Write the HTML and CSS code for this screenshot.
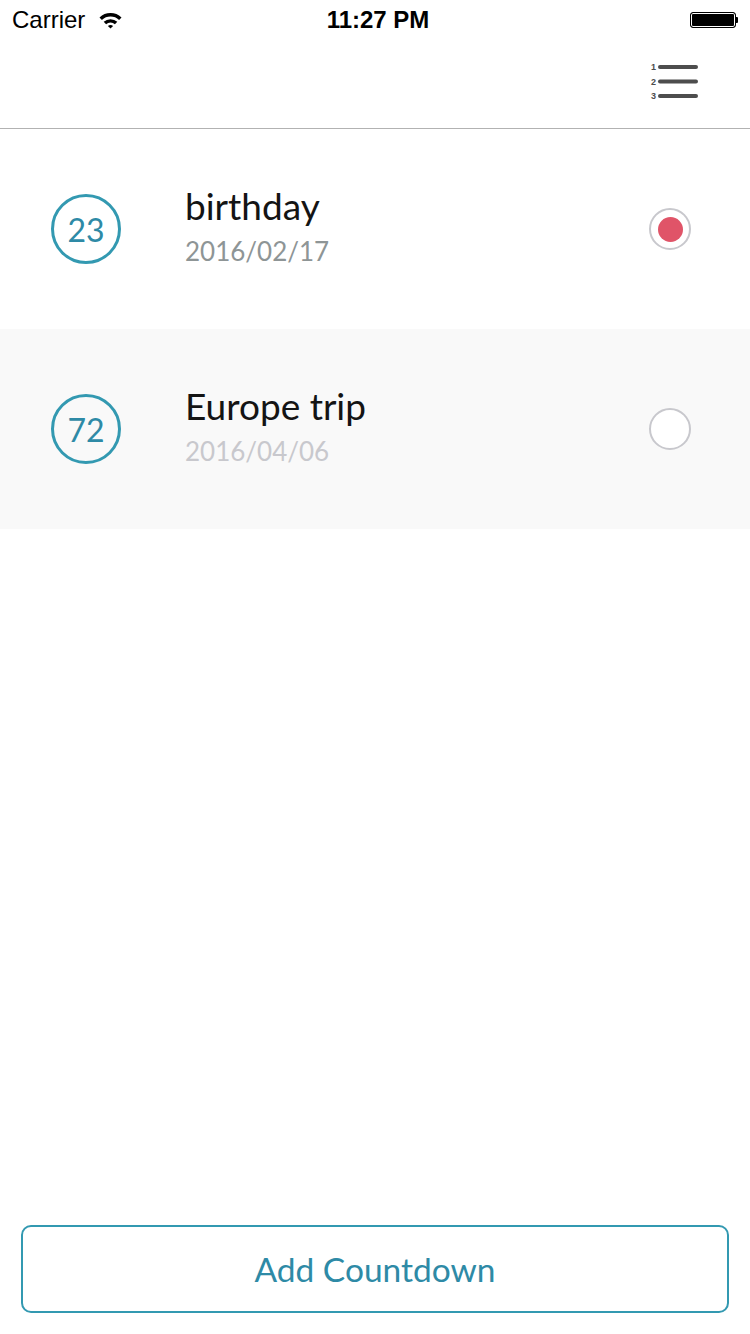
FILE: index.html
```html
<!DOCTYPE html>
<html lang="en">
	<head>
		<meta charset="utf-8">
		<meta name="viewport" content="width=device-width, initial-scale=1.0">
		<title>Countdown</title>
		<link rel="stylesheet" href="styles.css">
	</head>

	<body>
		<div class="page">
			<header class="statusbar">
				<div class="carrier">
					<span>Carrier</span>
					<svg class="wifi" width="25" height="18" viewBox="0 0 24 18">
						<path d="M1 6.5 A16 16 0 0 1 23 6.5 L20.6 9 A12.6 12.6 0 0 0 3.4 9 Z" fill="#000"/>
						<path d="M5.2 10.8 A10 10 0 0 1 18.8 10.8 L16.4 13.2 A6.6 6.6 0 0 0 7.6 13.2 Z" fill="#000"/>
						<path d="M9.4 15 A4 4 0 0 1 14.6 15 L12 17.6 Z" fill="#000"/>
					</svg>
				</div>
				<div class="clock">11:27 PM</div>
				<div class="battery">
					<span class="battery-body"></span>
					<span class="battery-tip"></span>
				</div>
			</header>

			<nav class="navbar">
				<svg class="menu-icon" width="48" height="42" viewBox="0 0 48 42">
					<text x="1" y="9" class="num">1</text>
					<text x="1" y="23.5" class="num">2</text>
					<text x="1" y="38" class="num">3</text>
					<line x1="10" y1="6" x2="46" y2="6" stroke="#4d4d4d" stroke-width="4" stroke-linecap="round"/>
					<line x1="10" y1="20.5" x2="46" y2="20.5" stroke="#4d4d4d" stroke-width="4" stroke-linecap="round"/>
					<line x1="10" y1="35" x2="46" y2="35" stroke="#4d4d4d" stroke-width="4" stroke-linecap="round"/>
				</svg>
			</nav>

			<main class="list">
				<article class="row">
					<div class="days">23</div>
					<div class="info">
						<h1>birthday</h1>
						<p>2016/02/17</p>
					</div>
					<div class="radio checked"></div>
				</article>
				<article class="row alt">
					<div class="days">72</div>
					<div class="info">
						<h1>Europe trip</h1>
						<p class="faded">2016/04/06</p>
					</div>
					<div class="radio"></div>
				</article>
			</main>

			<footer class="bottom">
				<button class="add-btn">Add Countdown</button>
			</footer>
		</div>
	</body>
</html>
```

FILE: styles.css
```css
html, body{
	margin: 0;
	padding: 0;
	background: #fff;
}
.page{
	width: 750px;
	height: 1334px;
	display: flex;
	flex-direction: column;
	font-family: Lato, "Open Sans", sans-serif;
}
.statusbar{
	height: 40px;
	display: flex;
	align-items: center;
	justify-content: space-between;
	padding: 0 12px 0 12px;
	font-family: "Liberation Sans", Arial, sans-serif;
	font-size: 24px;
	color: #000;
}
.carrier{
	display: flex;
	align-items: center;
	gap: 13px;
	width: 200px;
}
.clock{
	font-weight: bold;
	margin-left: 6px;
}
.battery{
	width: 200px;
	display: flex;
	justify-content: flex-end;
	align-items: center;
}
.battery-body{
	width: 44px;
	height: 14px;
	border: 1px solid #000;
	border-radius: 3px;
	background: #000;
	box-shadow: inset 0 0 0 1px #fff;
}
.battery-tip{
	width: 2px;
	height: 6px;
	background: #000;
	border-radius: 0 1px 1px 0;
}
.navbar{
	height: 88px;
	border-bottom: 1px solid #b2b2b2;
	display: flex;
	justify-content: flex-end;
	align-items: center;
	padding-right: 52px;
}
.menu-icon{
	margin-top: -4px;
}
.menu-icon .num{
	font-family: "Liberation Sans", Arial, sans-serif;
	font-size: 9px;
	font-weight: bold;
	fill: #4d4d4d;
}
.list{
	flex: 1;
}
.row{
	height: 200px;
	display: flex;
	align-items: center;
	padding: 0 59px 0 51px;
}
.row.alt{
	background: #f9f9f9;
}
.days{
	width: 64px;
	height: 64px;
	border: 3px solid #3399b1;
	border-radius: 50%;
	display: flex;
	align-items: center;
	justify-content: center;
	font-size: 32px;
	color: #2e8aa6;
}
.info{
	flex: 1;
	margin-left: 64px;
	margin-top: -4px;
}
.info h1{
	margin: 0;
	font-size: 37px;
	font-weight: normal;
	color: #141414;
	line-height: 44px;
}
.info p{
	margin: 3px 0 0 0;
	font-size: 26px;
	color: #8e9596;
	line-height: 40px;
}
.info p.faded{
	color: #c8c8cd;
}
.radio{
	width: 38px;
	height: 38px;
	border: 2px solid #c8c8cd;
	border-radius: 50%;
	display: flex;
	align-items: center;
	justify-content: center;
	background: #fff;
}
.radio.checked::after{
	content: "";
	width: 25px;
	height: 25px;
	border-radius: 50%;
	background: #e05468;
}
.bottom{
	padding: 0 21px 21px 21px;
}
.add-btn{
	width: 100%;
	height: 88px;
	border: 2px solid #3399b1;
	border-radius: 10px;
	background: #fff;
	font-family: Lato, "Open Sans", sans-serif;
	font-size: 33.5px;
	color: #2e8aa6;
}
```
